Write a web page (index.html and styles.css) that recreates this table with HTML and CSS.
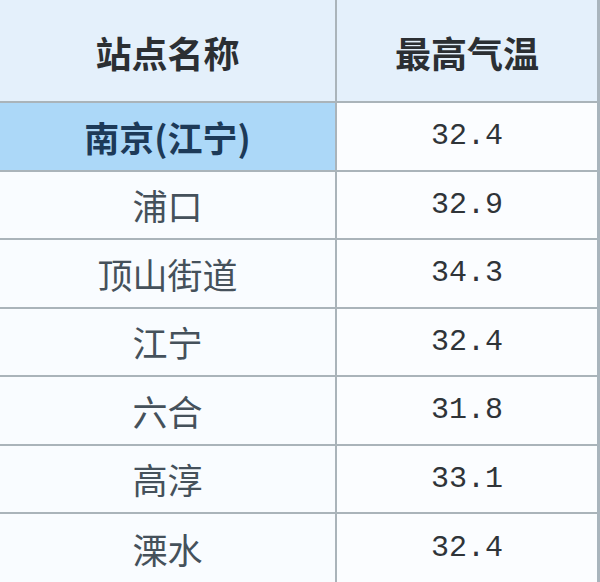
FILE: index.html
```html
<!DOCTYPE html>
<html lang="zh">
<head>
<meta charset="utf-8">
<link rel="stylesheet" href="styles.css">
</head>
<body>
<div class="table">
  <div class="cell head name">站点名称</div>
  <div class="cell head val">最高气温</div>
  <div class="cell name hl">南京(江宁)</div>
  <div class="cell val num">32.4</div>
  <div class="cell name">浦口</div>
  <div class="cell val num">32.9</div>
  <div class="cell name">顶山街道</div>
  <div class="cell val num">34.3</div>
  <div class="cell name">江宁</div>
  <div class="cell val num">32.4</div>
  <div class="cell name">六合</div>
  <div class="cell val num">31.8</div>
  <div class="cell name">高淳</div>
  <div class="cell val num">33.1</div>
  <div class="cell name last">溧水</div>
  <div class="cell val num last">32.4</div>
</div>
</body>
</html>
```
FILE: styles.css
```css
html, body {
  margin: 0;
  padding: 0;
  background: #f9fcff;
}
.table {
  width: 600px;
  height: 582px;
  overflow: hidden;
  display: grid;
  grid-template-columns: 337px 1fr;
  grid-template-rows: 103px repeat(7, 68.5px);
  border-right: 3px solid #a9b5bd;
  box-sizing: border-box;
  font-family: "Noto Sans CJK SC", "Noto Sans", sans-serif;
}
.cell {
  display: flex;
  align-items: center;
  justify-content: center;
  border-bottom: 2px solid #aab4ba;
  box-sizing: border-box;
  font-size: 35px;
  color: #45515b;
  background: #f9fcff;
}
.name {
  border-right: 2px solid #aab4ba;
}
.head {
  background: #e4f0fb;
  font-weight: 700;
  color: #2b2f33;
  font-size: 36px;
  padding-top: 2px;
}
.hl {
  background: #acd8f8;
  color: #1d3a58;
  font-weight: 700;
}
.num {
  font-family: "Liberation Mono", "DejaVu Sans Mono", monospace;
  font-size: 30px;
  color: #2f3438;
  background: #fbfdff;
}
.last {
  border-bottom: none;
}
```
